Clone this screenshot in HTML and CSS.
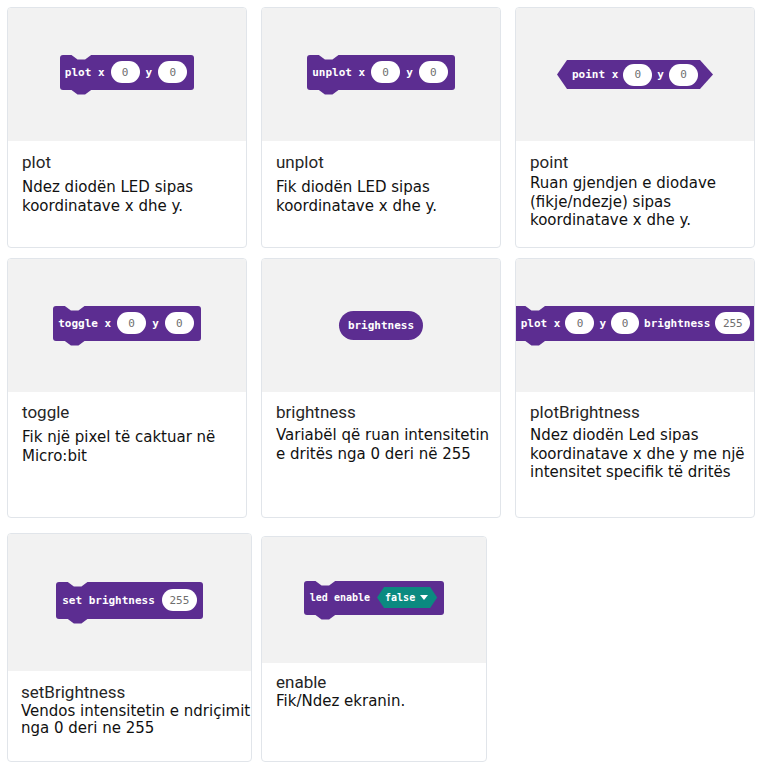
FILE: index.html
```html
<!DOCTYPE html>
<html>
<head>
<meta charset="utf-8">
<link rel="stylesheet" href="styles.css">
</head>
<body>
<div class="grid">
  <div class="card">
    <div class="shot"><div class="block stmt"><span>plot x</span><span class="num">0</span><span>y</span><span class="num">0</span></div></div>
    <div class="info p11"><div class="title">plot</div><div class="desc m6">Ndez diodën LED sipas koordinatave x dhe y.</div></div>
  </div>
  <div class="card">
    <div class="shot"><div class="block stmt"><span>unplot x</span><span class="num">0</span><span>y</span><span class="num">0</span></div></div>
    <div class="info p11"><div class="title">unplot</div><div class="desc m6">Fik diodën LED sipas koordinatave x dhe y.</div></div>
  </div>
  <div class="card">
    <div class="shot"><div class="block hexb"><span>point x</span><span class="num">0</span><span>y</span><span class="num">0</span></div></div>
    <div class="info p11"><div class="title">point</div><div class="desc m2">Ruan gjendjen e diodave (fikje/ndezje) sipas koordinatave x dhe y.</div></div>
  </div>

  <div class="card tall">
    <div class="shot"><div class="block stmt"><span>toggle x</span><span class="num">0</span><span>y</span><span class="num">0</span></div></div>
    <div class="info p10"><div class="title">toggle</div><div class="desc m6">Fik një pixel të caktuar në Micro:bit</div></div>
  </div>
  <div class="card tall">
    <div class="shot"><div class="block rep"><span>brightness</span></div></div>
    <div class="info p10"><div class="title">brightness</div><div class="desc m4">Variabël që ruan intensitetin e dritës nga 0 deri në 255</div></div>
  </div>
  <div class="card tall">
    <div class="shot"><div class="block stmt wide"><span>plot x</span><span class="num">0</span><span>y</span><span class="num n28">0</span><span>brightness</span><span class="num w">255</span></div></div>
    <div class="info p10"><div class="title">plotBrightness</div><div class="desc m4">Ndez diodën Led sipas koordinatave x dhe y me një intensitet specifik të dritës</div></div>
  </div>

  <div class="card c7">
    <div class="shot"><div class="block stmt set"><span>set brightness</span><span class="num w">255</span></div></div>
    <div class="info p11 flush"><div class="title">setBrightness</div><div class="desc tight">Vendos intensitetin e ndriçimit nga 0 deri ne 255</div></div>
  </div>
  <div class="card c8">
    <div class="shot"><div class="block stmt small"><span>led enable</span><span class="bool"><span>false</span><svg class="caret" width="8" height="5" viewBox="0 0 8 5"><path d="M0 0 H8 L4 5 Z" fill="#fff"/></svg></span></div></div>
    <div class="info p9"><div class="title">enable</div><div class="desc tight">Fik/Ndez ekranin.</div></div>
  </div>
</div>
</body>
</html>
```

FILE: styles.css
```css
body {
  margin: 0;
  background: #fff;
}

.grid {
  display: grid;
  grid-template-columns: repeat(3, 240px);
  grid-template-rows: 241px 260px auto;
  column-gap: 14px;
  row-gap: 10px;
  padding: 7px 0 0 7px;
  align-items: start;
}

.card {
  box-sizing: border-box;
  height: 241px;
  border: 1px solid #e1e5ea;
  border-radius: 4px;
  background: #fff;
  overflow: hidden;
  display: flex;
  flex-direction: column;
}

.card.tall {
  height: 260px;
}

.card.c7 {
  width: 245px;
  height: 229px;
  margin-top: 5px;
}

.card.c8 {
  width: 226px;
  height: 226px;
  margin-top: 8px;
}

.shot {
  flex: none;
  height: 133px;
  background: #f2f2f2;
  display: flex;
  align-items: center;
  justify-content: center;
  overflow: hidden;
}

.c7 .shot {
  height: 137px;
}

.c8 .shot {
  height: 126px;
}

.info {
  padding: 10px 8px 0 14px;
}

.info.p11 { padding-top: 11px; }
.info.p10 { padding-top: 10px; }
.info.p9 { padding-top: 9px; }
.info.flush { padding-right: 0; padding-left: 13px; }

.title {
  font: 400 17px/20px Roboto, "Liberation Sans", sans-serif;
  color: #262626;
}

.desc {
  font: 400 15px/18.5px "DejaVu Sans", Verdana, sans-serif;
  color: #111;
}

.desc.m6 { margin-top: 6px; }
.desc.m4 { margin-top: 4px; }
.desc.m2 { margin-top: 2px; }
.desc.tight {
  margin-top: 1px;
  line-height: 17px;
}

/* MakeCode blocks */
.block {
  position: relative;
  flex: none;
  display: inline-flex;
  align-items: center;
  gap: 6px;
  box-sizing: border-box;
  background: #5c2d91;
  color: #fff;
  font: 700 11px/1 "DejaVu Sans Mono", monospace;
  white-space: nowrap;
}

.stmt {
  height: 35px;
  padding: 0 7px 0 5px;
  border-radius: 3px;
  margin-bottom: 5px;
}

.stmt::before,
.stmt::after {
  content: "";
  position: absolute;
  left: 11px;
  width: 21px;
  height: 5px;
  clip-path: polygon(0 0, 100% 0, 68% 100%, 32% 100%);
}

.stmt::before {
  top: 0;
  background: #f2f2f2;
}

.stmt::after {
  top: 100%;
  background: #5c2d91;
}

.stmt.wide {
  gap: 5px;
  padding: 0 6px 0 7px;
}

.stmt.set {
  height: 37px;
  padding: 0 6px 0 6px;
  gap: 7px;
}

.stmt.small {
  height: 34px;
  font-size: 10px;
  padding: 0 7px 0 6px;
  gap: 7px;
}

.hexb {
  height: 29px;
  padding: 0 15px;
  gap: 5px;
  clip-path: polygon(0 50%, 10px 0, calc(100% - 13px) 0, 100% 50%, calc(100% - 13px) 100%, 10px 100%);
}

.rep {
  height: 29px;
  padding: 0 9px;
  border-radius: 15px;
}

.num {
  display: inline-flex;
  align-items: center;
  justify-content: center;
  width: 29px;
  height: 22px;
  border-radius: 11px;
  background: #fff;
  color: #6f6f6f;
  font-weight: 400;
}

.num.n28 { width: 28px; }
.num.w { width: 35px; }

.bool {
  display: inline-flex;
  align-items: center;
  gap: 5px;
  height: 21px;
  padding: 0 9px 0 8px;
  background: #0b8a80;
  clip-path: polygon(0 50%, 7px 0, calc(100% - 7px) 0, 100% 50%, calc(100% - 7px) 100%, 7px 100%);
}

.caret {
  display: block;
}
```
